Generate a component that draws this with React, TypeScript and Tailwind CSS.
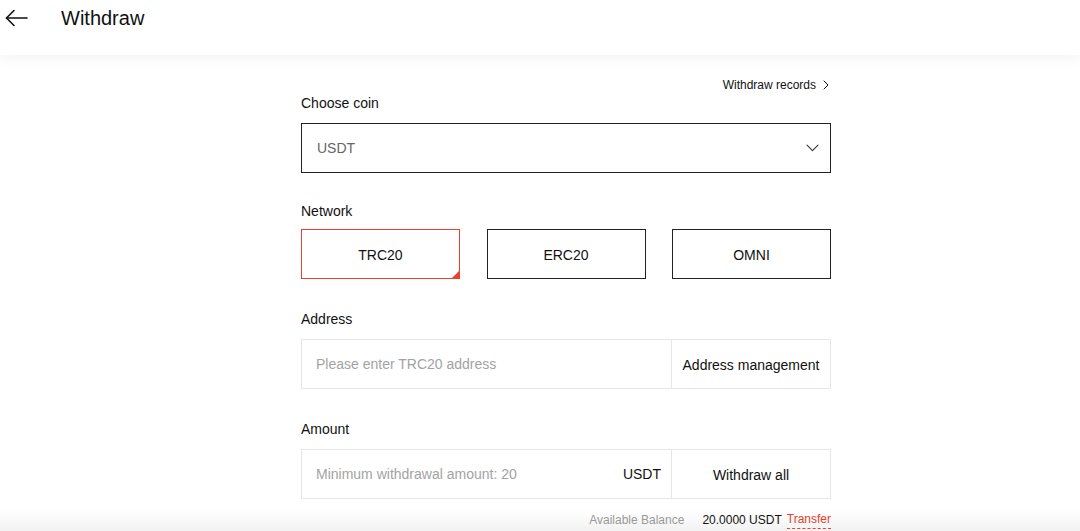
import React from "react";

const font = { fontFamily: '"Liberation Sans", Arial, sans-serif' };

export default function App() {
  return (
    <div
      className="relative h-[531px] w-[1080px] overflow-hidden bg-[linear-gradient(to_bottom,#ffffff_0px,#ffffff_510px,#f2f2f2_531px)] text-[#111]"
      style={font}
    >
      {/* Header */}
      <div className="relative z-10 flex h-[55px] items-start bg-white shadow-[0_3px_14px_rgba(0,0,0,0.05)]">
        <div className="flex h-[36px] items-center pl-[5px]">
          <svg width="23" height="18" viewBox="0 0 23 18" fill="none" stroke="#111" strokeWidth="1.6" strokeLinecap="round" strokeLinejoin="round">
            <path d="M22 9H1.5" />
            <path d="M9 1.5L1.5 9L9 16.5" />
          </svg>
        </div>
        <div className="ml-[33px] flex h-[36px] items-center text-[20px] leading-[28px]">Withdraw</div>
      </div>

      {/* Body */}
      <div className="ml-[301px] flex w-[530px] flex-col pt-[22px]">
        <div className="flex items-center justify-end gap-[7px] pr-[2px] text-[12px] leading-[16px]">
          <span>Withdraw records</span>
          <svg width="6" height="10" viewBox="0 0 6 10" fill="none" stroke="#111" strokeWidth="1" strokeLinecap="round" strokeLinejoin="round">
            <path d="M1 1l4 4-4 4" />
          </svg>
        </div>

        <div className="text-[14px] leading-[20px]">Choose coin</div>
        <div className="mt-[10px] flex h-[50px] items-center justify-between border border-[#222] pl-[15px] pr-[11px]">
          <span className="text-[14px] text-[#666]">USDT</span>
          <svg width="13" height="8" viewBox="0 0 13 8" fill="none" stroke="#333" strokeWidth="1.1" strokeLinecap="round" strokeLinejoin="round">
            <path d="M1 1.2l5.5 5.5L12 1.2" />
          </svg>
        </div>

        <div className="mt-[28px] text-[14px] leading-[20px]">Network</div>
        <div className="mt-[8px] flex justify-between">
          <div className="relative flex h-[50px] w-[159px] items-center justify-center border border-[#e8412e] pt-[2px] text-[14px]">
            TRC20
            <div className="absolute bottom-0 right-0 h-[7px] w-[7px] bg-[#e8412e] [clip-path:polygon(100%_0,100%_100%,0_100%)]" />
          </div>
          <div className="flex h-[50px] w-[159px] items-center justify-center border border-[#222] pt-[2px] text-[14px]">ERC20</div>
          <div className="flex h-[50px] w-[159px] items-center justify-center border border-[#222] pt-[2px] text-[14px]">OMNI</div>
        </div>

        <div className="mt-[30px] text-[14px] leading-[20px]">Address</div>
        <div className="mt-[10px] flex h-[50px] border border-[#e6e6e6]">
          <div className="flex flex-1 items-center pl-[14px] pt-[1px] text-[14px] text-[#a3a3a3]">Please enter TRC20 address</div>
          <div className="flex w-[159px] items-center justify-center border-l border-[#e6e6e6] pt-[2px] text-[14px]">Address management</div>
        </div>

        <div className="mt-[30px] text-[14px] leading-[20px]">Amount</div>
        <div className="mt-[10px] flex h-[50px] border border-[#e6e6e6]">
          <div className="flex flex-1 items-center justify-between pl-[14px] pr-[10px] pt-[1px] text-[14px]">
            <span className="text-[#a3a3a3]">Minimum withdrawal amount: 20</span>
            <span>USDT</span>
          </div>
          <div className="flex w-[159px] items-center justify-center border-l border-[#e6e6e6] pt-[2px] text-[14px]">Withdraw all</div>
        </div>

        <div className="mt-[11px] flex items-center justify-end text-[12px] leading-[18px]">
          <span className="text-[#999]">Available Balance</span>
          <span className="ml-[18px]">20.0000 USDT</span>
          <span className="ml-[5px] border-b border-dashed border-[#e8412e] text-[#e8412e]">Transfer</span>
        </div>
      </div>
    </div>
  );
}
